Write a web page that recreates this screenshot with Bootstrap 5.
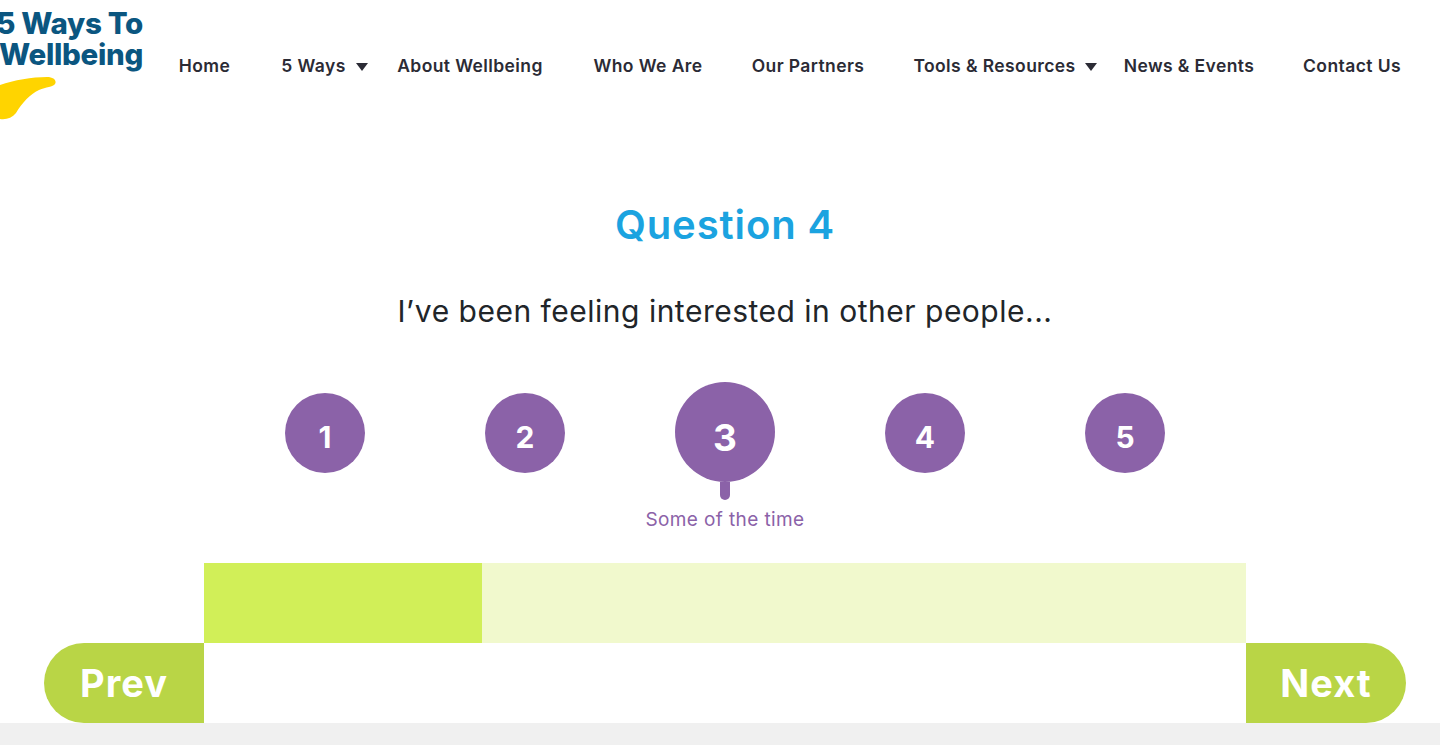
<!DOCTYPE html>
<html lang="en">
  <head>
    <meta charset="UTF-8" />
    <meta name="viewport" content="width=device-width, initial-scale=1.0" />
    <title>5 Ways To Wellbeing | Question 4</title>
    <link href="https://cdn.jsdelivr.net/npm/bootstrap@5.3.3/dist/css/bootstrap.min.css" rel="stylesheet" />
    <style>
      html, body {
        height: 745px;
        overflow: hidden;
      }
      body {
        font-family: "Inter", "Liberation Sans", sans-serif;
        background-color: #f0f0f0;
        color: #212529;
      }
      .page-wrap {
        background: #fff;
        height: 723px;
      }
      .site-head {
        height: 130px;
      }
      .logo-box {
        width: 143px;
        height: 130px;
        flex-shrink: 0;
      }
      .logo-text {
        font-weight: 800;
        font-size: 29.5px;
        letter-spacing: -0.3px;
        line-height: 31px;
        color: #0b5680;
        white-space: nowrap;
        padding-top: 8px;
      }
      .logo-swoosh {
        display: block;
        margin-top: 7px;
      }
      .main-nav {
        display: grid;
        grid-template-columns: 103px 115px 198px 158px 162px 211px 178px 148px;
        margin-left: 10px;
        padding-top: 55px;
        height: 77px;
      }
      .main-nav a {
        color: #2b2b35;
        font-size: 17.5px;
        font-weight: 600;
        letter-spacing: 0.4px;
        line-height: 22px;
        text-align: center;
        text-decoration: none;
        white-space: nowrap;
        position: relative;
      }
      .has-drop::after {
        content: "";
        position: absolute;
        right: 3px;
        top: 8px;
        border-left: 6px solid transparent;
        border-right: 6px solid transparent;
        border-top: 8px solid #2b2b35;
      }
      .quiz-title {
        color: #1ba3e0;
        font-size: 40px;
        font-weight: 600;
        letter-spacing: 0.9px;
        line-height: 48px;
        margin: 71px 0 0;
      }
      .quiz-text {
        font-size: 30px;
        font-weight: 400;
        letter-spacing: 0.5px;
        line-height: 40px;
        margin: 42px 0 0;
      }
      .quiz-wrap {
        padding-left: 44px;
        padding-right: 34px;
      }
      .score-row {
        margin-top: 51px;
        height: 181px;
      }
      .score-col {
        width: 200px;
      }
      .score-dot {
        width: 80px;
        height: 80px;
        margin-top: 11px;
        padding-top: 9px;
        background: #8b62a8;
        color: #fff;
        font-size: 30px;
        font-weight: 700;
      }
      .score-dot.picked {
        width: 100px;
        height: 100px;
        margin-top: 0;
        padding-top: 12px;
        font-size: 37px;
      }
      .score-tick {
        width: 10px;
        height: 18px;
        background: #8b62a8;
        border-radius: 0 0 5px 5px;
      }
      .score-label {
        color: #8b62a8;
        font-size: 19px;
        letter-spacing: 0.4px;
        line-height: 26px;
        margin-top: 7px;
        white-space: nowrap;
      }
      .bar-track {
        width: 1042px;
        height: 80px;
        background: #f1f9cd;
      }
      .bar-fill {
        height: 100%;
        background: #d1ef58;
      }
      .step-btn {
        width: 160px;
        height: 80px;
        background: #b9d546;
        color: #fff;
        border: 0;
        font-size: 38px;
        font-weight: 700;
        letter-spacing: 1px;
        padding: 0;
      }
      .step-prev {
        border-radius: 40px 0 0 40px;
      }
      .step-next {
        border-radius: 0 40px 40px 0;
      }
      .step-row {
        width: 1362px;
      }
    </style>
  </head>
  <body>
    <div class="page-wrap">
      <header class="site-head d-flex">
        <div class="logo-box">
          <div class="logo-text d-flex flex-column align-items-end">
            <span>5 Ways To</span>
            <span>Wellbeing</span>
          </div>
          <svg class="logo-swoosh" width="56" height="44" viewBox="0 0 56 44">
            <path d="M0 8C14 3 32 0 47 0C54 0 57 4 55 7C53 10 46 10 39 13C30 17 22 26 16 36C12 41 6 43 0 42Z" fill="#ffd400" />
          </svg>
        </div>
        <nav class="main-nav">
          <a href="#">Home</a>
          <a href="#" class="has-drop">5 Ways</a>
          <a href="#">About Wellbeing</a>
          <a href="#">Who We Are</a>
          <a href="#">Our Partners</a>
          <a href="#" class="has-drop">Tools &amp; Resources</a>
          <a href="#">News &amp; Events</a>
          <a href="#">Contact Us</a>
        </nav>
      </header>

      <main class="quiz-wrap">
        <h2 class="quiz-title text-center">Question 4</h2>
        <p class="quiz-text text-center">I’ve been feeling interested in other people...</p>

        <div class="score-row d-flex justify-content-center">
          <div class="score-col d-flex flex-column align-items-center">
            <div class="score-dot rounded-circle d-flex align-items-center justify-content-center">1</div>
          </div>
          <div class="score-col d-flex flex-column align-items-center">
            <div class="score-dot rounded-circle d-flex align-items-center justify-content-center">2</div>
          </div>
          <div class="score-col d-flex flex-column align-items-center">
            <div class="score-dot picked rounded-circle d-flex align-items-center justify-content-center">3</div>
            <div class="score-tick"></div>
            <div class="score-label">Some of the time</div>
          </div>
          <div class="score-col d-flex flex-column align-items-center">
            <div class="score-dot rounded-circle d-flex align-items-center justify-content-center">4</div>
          </div>
          <div class="score-col d-flex flex-column align-items-center">
            <div class="score-dot rounded-circle d-flex align-items-center justify-content-center">5</div>
          </div>
        </div>

        <div class="d-flex justify-content-center">
          <div class="bar-track">
            <div class="bar-fill" style="width: 26.7%"></div>
          </div>
        </div>

        <div class="step-row d-flex justify-content-between">
          <button type="button" class="step-btn step-prev">Prev</button>
          <button type="button" class="step-btn step-next">Next</button>
        </div>
      </main>
    </div>
    <script src="https://cdn.jsdelivr.net/npm/bootstrap@5.3.3/dist/js/bootstrap.bundle.min.js"></script>
  </body>
</html>
